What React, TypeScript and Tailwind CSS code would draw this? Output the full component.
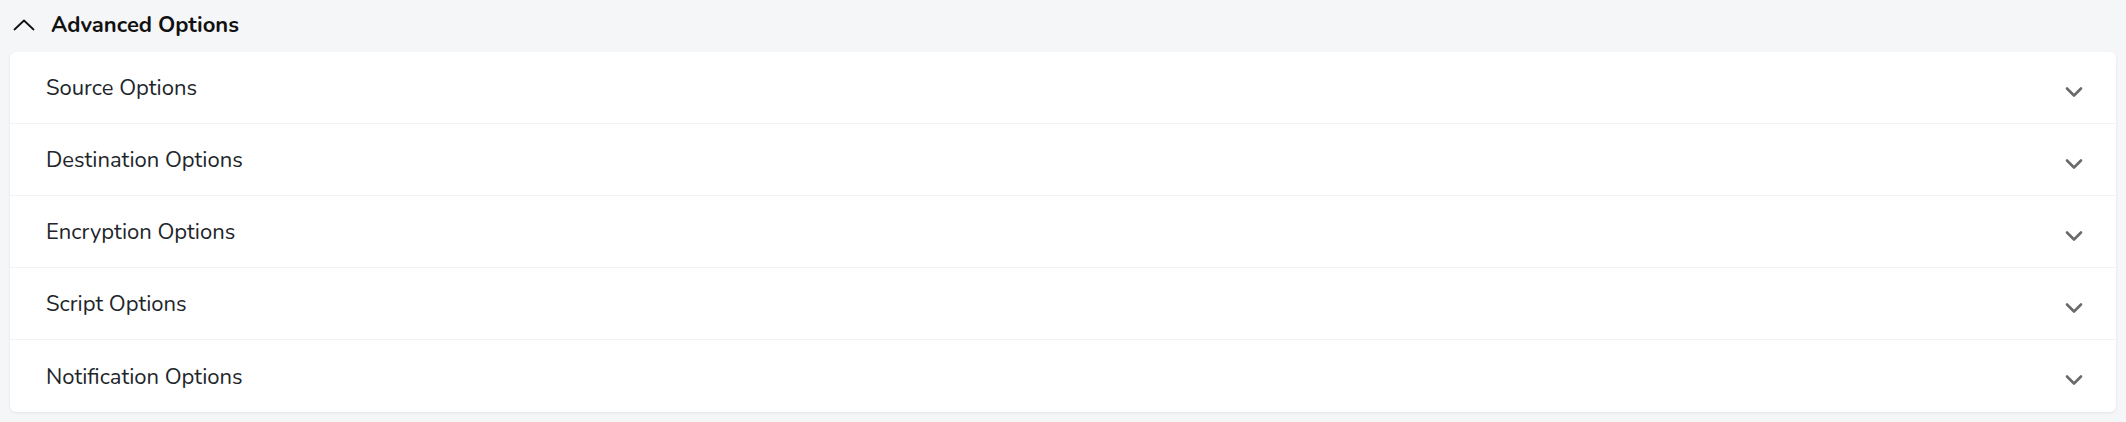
import React, { useState } from 'react';

const sections = [
  'Source Options',
  'Destination Options',
  'Encryption Options',
  'Script Options',
  'Notification Options',
];

function ChevronUp() {
  return (
    <svg width="22" height="12" viewBox="0 0 22 12" fill="none">
      <path d="M1.5 10.5L11 1.5l9.5 9" stroke="#111" strokeWidth="1.8" strokeLinecap="round" strokeLinejoin="round" />
    </svg>
  );
}

function ChevronDown() {
  return (
    <svg width="18" height="12" viewBox="0 0 18 12" fill="none">
      <path d="M2 2.5l7 7 7-7" stroke="#6b6b6b" strokeWidth="2.6" strokeLinecap="round" strokeLinejoin="round" />
    </svg>
  );
}

export default function App() {
  const [open, setOpen] = useState(true);

  return (
    <div className="min-h-[422px] w-full bg-[#f5f6f8] px-[10px] pb-[11px] font-['Nunito','Noto_Sans',sans-serif]">
      {/* Header */}
      <button
        onClick={() => setOpen(!open)}
        className="flex h-[52px] items-center gap-[16px] pl-[3px] text-[#111] pb-[2px]"
      >
        <ChevronUp />
        <span className="text-[22px] font-bold">Advanced Options</span>
      </button>

      {open && (
        <div className="rounded-md bg-white shadow-[0_1px_3px_rgba(0,0,0,0.08)]">
          {sections.map((s, i) => (
            <div
              key={s}
              className={`flex h-[72px] items-center justify-between pl-[36px] pr-[33px] ${
                i < sections.length - 1 ? 'border-b border-[#f2f3f5]' : ''
              }`}
            >
              <span className="pt-[2px] text-[22px] text-[#212529]">{s}</span>
              <span className="pt-[8px]">
                <ChevronDown />
              </span>
            </div>
          ))}
        </div>
      )}
    </div>
  );
}
